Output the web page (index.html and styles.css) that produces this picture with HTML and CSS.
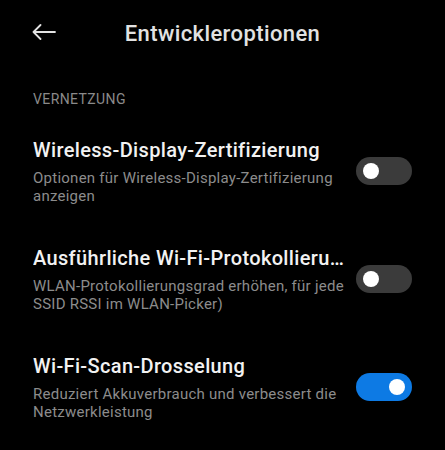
FILE: index.html
```html
<!DOCTYPE html>
<html>
    <head>
        <meta charset="utf-8" />
        <title>Entwickleroptionen</title>
        <meta name="viewport" content="width=device-width, initial-scale=1.0" />
        <link rel="stylesheet" href="styles.css">
    </head>

    <body>
        <header class="topbar">
            <svg class="back" width="24" height="16" viewBox="0 0 24 16">
                <path d="M23 8H1.5M8.5 1L1.5 8l7 7" fill="none" stroke="#e2e2e2" stroke-width="1.8" stroke-linecap="round" stroke-linejoin="round" />
            </svg>
            <h1 class="title">Entwickleroptionen</h1>
        </header>

        <main>
            <div class="section-label">VERNETZUNG</div>

            <div class="item">
                <div class="item-text">
                    <div class="item-title">Wireless-Display-Zertifizierung</div>
                    <div class="item-sub">Optionen für Wireless-Display-Zertifizierung anzeigen</div>
                </div>
                <div class="switch"><span class="knob"></span></div>
            </div>

            <div class="item">
                <div class="item-text">
                    <div class="item-title">Ausführliche Wi-Fi-Protokollierung</div>
                    <div class="item-sub">WLAN-Protokollierungsgrad erhöhen, für jede SSID RSSI im WLAN-Picker)</div>
                </div>
                <div class="switch"><span class="knob"></span></div>
            </div>

            <div class="item">
                <div class="item-text">
                    <div class="item-title">Wi-Fi-Scan-Drosselung</div>
                    <div class="item-sub">Reduziert Akkuverbrauch und verbessert die Netzwerkleistung</div>
                </div>
                <div class="switch on"><span class="knob"></span></div>
            </div>
        </main>
    </body>
</html>
```

FILE: styles.css
```css
body {
    margin: 0;
    background: #000;
    color: #f2f2f2;
    font-family: Roboto, "Noto Sans", sans-serif;
}

.topbar {
    position: relative;
    display: flex;
    align-items: center;
    justify-content: center;
    height: 64px;
}

.back {
    position: absolute;
    left: 32px;
    top: 24px;
}

.title {
    margin: 0;
    font-size: 22px;
    font-weight: 500;
    letter-spacing: 0.4px;
    color: #e2e2e2;
    padding-top: 2px;
}

.section-label {
    margin: 25px 33px 8px;
    font-size: 14px;
    line-height: 20px;
    letter-spacing: 0.4px;
    color: #8a8a8a;
}

.item {
    display: flex;
    align-items: center;
    gap: 8px;
    padding: 20px 33px;
}

.item-text {
    flex: 1;
    min-width: 0;
}

.item-title {
    font-size: 20px;
    font-weight: 500;
    line-height: 26px;
    letter-spacing: 0.35px;
    white-space: nowrap;
    overflow: hidden;
    text-overflow: ellipsis;
}

.item-sub {
    margin-top: 6px;
    font-size: 15px;
    line-height: 18px;
    letter-spacing: 0.25px;
    color: #8c8c8c;
}

.switch {
    flex: none;
    display: flex;
    align-items: center;
    box-sizing: border-box;
    width: 56px;
    height: 28px;
    padding: 0 7px;
    border-radius: 14px;
    background: #3b3b3b;
}

.switch.on {
    justify-content: flex-end;
    background: #0d7ae4;
}

.knob {
    width: 16px;
    height: 16px;
    border-radius: 50%;
    background: #fff;
}
```
